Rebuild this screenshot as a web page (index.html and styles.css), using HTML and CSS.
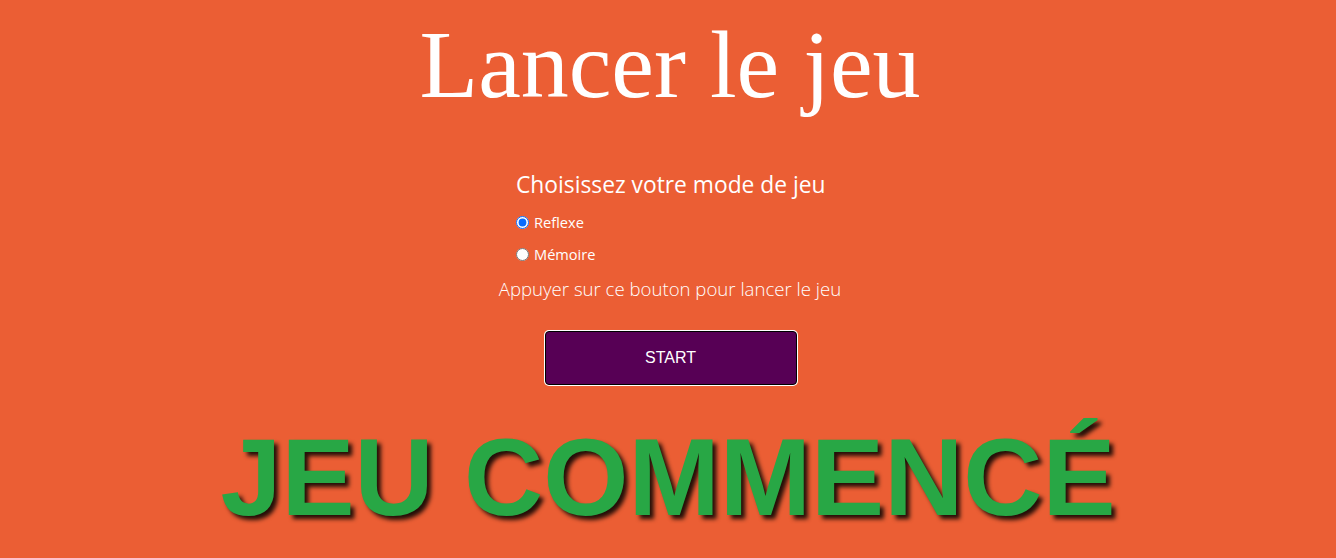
FILE: index.html
```html
<!DOCTYPE html>
<html lang="fr">
<head>
<meta charset="utf-8">
<title>Lancer le jeu</title>
<link rel="stylesheet" href="styles.css">
</head>
<body>
<main class="page">
  <h1 class="title">Lancer le jeu</h1>
  <form class="mode-form">
    <h2 class="mode-title">Choisissez votre mode de jeu</h2>
    <label class="mode-option"><input type="radio" name="mode" checked>Reflexe</label>
    <label class="mode-option"><input type="radio" name="mode">Mémoire</label>
  </form>
  <p class="hint">Appuyer sur ce bouton pour lancer le jeu</p>
  <button class="start" type="button">START</button>
  <div class="status">JEU COMMENCÉ</div>
</main>
</body>
</html>
```

FILE: styles.css
```css
html, body {
  margin: 0;
  padding: 0;
  background: #eb5e34;
  height: 100%;
  overflow: hidden;
}

.page {
  display: flex;
  flex-direction: column;
  align-items: center;
  color: #fff;
  font-family: "Open Sans", "Noto Sans", sans-serif;
}

.title {
  font-family: "Liberation Serif", serif;
  font-weight: normal;
  font-size: 96px;
  line-height: 110px;
  margin: 10px 0 0 4px;
}

.mode-form {
  display: flex;
  flex-direction: column;
  align-items: flex-start;
  width: 310px;
  margin-top: 50px;
  margin-left: 6px;
}

.mode-title {
  font-size: 22.8px;
  font-weight: normal;
  line-height: 30px;
  margin: 0 0 12px;
  white-space: nowrap;
}

.mode-option {
  display: flex;
  align-items: center;
  font-size: 14.6px;
  line-height: 20px;
  margin-bottom: 12px;
}

.mode-option input {
  margin: 0 5px 0 0;
  width: 13px;
  height: 13px;
  accent-color: #0a6cff;
}

.hint {
  font-size: 18.6px;
  font-weight: 300;
  line-height: 26px;
  margin: 0 0 0 4px;
  white-space: nowrap;
}

.start {
  margin: 29px 0 0 5px;
  width: 252px;
  height: 54px;
  background: #570055;
  color: #fff;
  font-family: "Liberation Sans", Arial, sans-serif;
  font-size: 16px;
  border: 1px solid #000;
  border-radius: 4px;
  box-shadow: 0 0 0 1px #fff;
}

.status {
  margin-top: 30px;
  font-family: "Liberation Sans", Arial, sans-serif;
  font-weight: bold;
  font-size: 109.6px;
  line-height: 125px;
  color: #28a745;
  text-shadow: 4px 4px 4px rgba(0, 0, 0, 0.85);
}
```
